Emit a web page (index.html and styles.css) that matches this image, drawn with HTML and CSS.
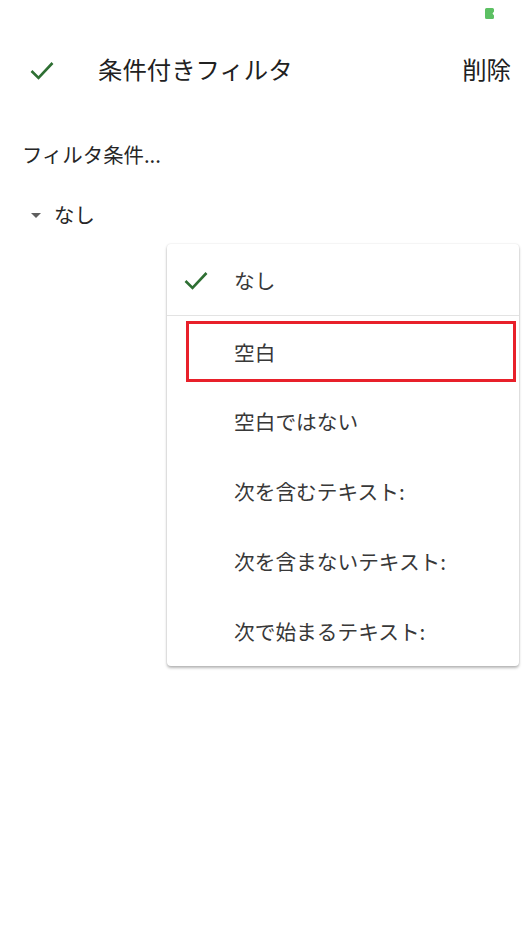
FILE: index.html
```html
<!DOCTYPE html>
<html lang="ja">
<head>
<meta charset="utf-8">
<link rel="stylesheet" href="styles.css">
</head>
<body>
<div class="screen">
  <div class="statusbar">
    <svg class="battery" width="9" height="11" viewBox="0 0 9 11"><path d="M1.5 0H7.5A1.5 1.5 0 0 1 9 1.5V3.5L7.5 5.5L9 7.5V9.5A1.5 1.5 0 0 1 7.5 11H1.5A1.5 1.5 0 0 1 0 9.5V1.5A1.5 1.5 0 0 1 1.5 0Z" fill="#5cc063"/></svg>
  </div>
  <header class="appbar">
    <svg class="appbar-check" width="24" height="19" viewBox="0 0 24 19"><path d="M1.5 10L8.5 17L22.5 2" fill="none" stroke="#2e6f33" stroke-width="2.6"/></svg>
    <div class="appbar-title">条件付きフィルタ</div>
    <div class="appbar-action">削除</div>
  </header>
  <div class="section-label">フィルタ条件...</div>
  <div class="select">
    <span class="select-arrow"></span>
    <span class="select-value">なし</span>
  </div>
  <div class="menu">
    <div class="menu-item menu-item-selected">
      <svg class="menu-check" width="24" height="19" viewBox="0 0 24 19"><path d="M1.5 10L8.5 17L22.5 2" fill="none" stroke="#2e6f33" stroke-width="2.6"/></svg>
      <span class="menu-text">なし</span>
    </div>
    <div class="menu-divider"></div>
    <div class="menu-item menu-item-marked">
      <div class="mark-box"><span class="menu-text">空白</span></div>
    </div>
    <div class="menu-item"><span class="menu-text">空白ではない</span></div>
    <div class="menu-item"><span class="menu-text">次を含むテキスト:</span></div>
    <div class="menu-item"><span class="menu-text">次を含まないテキスト:</span></div>
    <div class="menu-item"><span class="menu-text">次で始まるテキスト:</span></div>
  </div>
</div>
</body>
</html>
```
FILE: styles.css
```css
* { box-sizing: border-box; }
html, body { margin: 0; padding: 0; background: #fff; }
body {
  font-family: "Noto Sans CJK JP", "Noto Sans", Roboto, sans-serif;
  color: #222;
}
.screen { width: 525px; height: 934px; }
.statusbar {
  height: 26px;
  display: flex;
  justify-content: flex-end;
  align-items: flex-start;
  padding: 8px 31px 0 0;
}
.appbar {
  height: 86px;
  display: flex;
  align-items: center;
  padding: 0 14px 0 30px;
}
.appbar-check { flex: none; margin-top: 3px; }
.appbar-title {
  margin-left: 44px;
  font-size: 24.4px;
  line-height: 30px;
  color: #212121;
  flex: 1;
}
.appbar-action {
  font-size: 24.4px;
  line-height: 30px;
  color: #212121;
}
.section-label {
  margin: 27px 0 0 22px;
  font-size: 20.4px;
  line-height: 30px;
  color: #262626;
}
.select {
  margin: 30px 0 0 31px;
  height: 30px;
  display: flex;
  align-items: center;
}
.select-arrow {
  width: 0; height: 0;
  border-left: 5.5px solid transparent;
  border-right: 5.5px solid transparent;
  border-top: 5.5px solid #5f5f5f;
  margin-top: 2px;
}
.select-value {
  margin-left: 13px;
  font-size: 20.4px;
  line-height: 30px;
  color: #262626;
}
.menu {
  margin: 15px 0 0 167px;
  width: 352px;
  background: #fff;
  border-radius: 4px;
  box-shadow: 0 2px 3px rgba(0,0,0,0.28), 0 0 2px rgba(0,0,0,0.12);
}
.menu-item {
  height: 70px;
  display: flex;
  align-items: center;
  padding-left: 67px;
}
.menu-item-selected { height: 71px; padding-left: 17px; }
.menu-check { flex: none; margin-right: 26px; margin-top: 1px; }
.menu-divider { height: 1px; background: #e3e3e3; }
.menu-text {
  font-size: 20.7px;
  line-height: 30px;
  color: #383838;
  white-space: nowrap;
}
.menu-item-marked {
  padding: 5px 3px 4px 19px;
  align-items: stretch;
}
.mark-box {
  flex: 1;
  border: 3px solid #e8202a;
  display: flex;
  align-items: center;
  padding-left: 45px;
}
```
